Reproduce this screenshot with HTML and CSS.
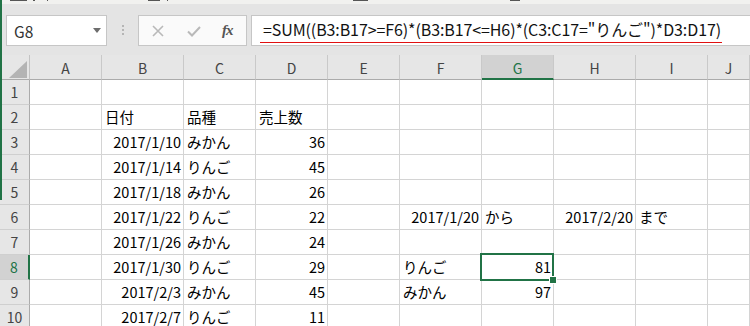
FILE: index.html
```html
<!DOCTYPE html>
<html lang="ja">
<head>
  <meta charset="UTF-8" />
  <title>Excel - SUM</title>
  <link rel="stylesheet" href="styles.css">
</head>
<body>
  <div class="app">
    <div class="window-edge"></div>
    <div class="ribbon-edge">
      <i class="mk" style="margin-left:10px;width:17px"></i>
      <i class="mk" style="margin-left:6px;width:2px"></i>
      <i class="mk" style="margin-left:12px;width:1px"></i>
      <i class="mk" style="margin-left:100px;width:12px"></i>
      <i class="mk" style="margin-left:7px;width:1px"></i>
      <i class="mk" style="margin-left:185px;width:15px"></i>
      <i class="mk" style="margin-left:142px;width:10px"></i>
    </div>

    <div class="formula-bar">
      <div class="name-box">
        <span>G8</span>
        <svg class="drop" width="8" height="5" viewBox="0 0 8 5"><path d="M0 0h8L4 5z" fill="#6d6d6d"/></svg>
      </div>
      <div class="grip"><i></i><i></i><i></i></div>
      <div class="fx-buttons">
        <svg width="12" height="12" viewBox="0 0 12 12"><path d="M1 1l10 10M11 1L1 11" stroke="#b9b9b9" stroke-width="1.6"/></svg>
        <svg width="14" height="12" viewBox="0 0 14 12"><path d="M1 6.5l4 4L13 2" fill="none" stroke="#b9b9b9" stroke-width="2"/></svg>
        <span class="fx">fx</span>
      </div>
      <div class="formula-input">
        <span class="formula">=SUM((B3:B17&gt;=F6)*(B3:B17&lt;=H6)*(C3:C17="りんご")*D3:D17)</span>
      </div>
    </div>

    <div class="sheet">
      <div class="row head">
        <div class="corner"><svg width="18" height="17" viewBox="0 0 18 17"><path d="M18 0v17H0z" fill="#b4b4b4"/></svg></div>
        <div class="ch">A</div><div class="ch">B</div><div class="ch">C</div><div class="ch">D</div><div class="ch">E</div>
        <div class="ch">F</div><div class="ch sel">G</div><div class="ch">H</div><div class="ch">I</div><div class="ch">J</div>
      </div>

      <div class="row">
        <div class="rh">1</div><div class="c"></div><div class="c"></div><div class="c"></div><div class="c"></div><div class="c"></div>
        <div class="c"></div><div class="c"></div><div class="c"></div><div class="c"></div><div class="c"></div>
      </div>
      <div class="row">
        <div class="rh">2</div><div class="c"></div><div class="c">日付</div><div class="c">品種</div><div class="c">売上数</div><div class="c"></div>
        <div class="c"></div><div class="c"></div><div class="c"></div><div class="c"></div><div class="c"></div>
      </div>
      <div class="row">
        <div class="rh">3</div><div class="c"></div><div class="c num">2017/1/10</div><div class="c">みかん</div><div class="c num">36</div><div class="c"></div>
        <div class="c"></div><div class="c"></div><div class="c"></div><div class="c"></div><div class="c"></div>
      </div>
      <div class="row">
        <div class="rh">4</div><div class="c"></div><div class="c num">2017/1/14</div><div class="c">りんご</div><div class="c num">45</div><div class="c"></div>
        <div class="c"></div><div class="c"></div><div class="c"></div><div class="c"></div><div class="c"></div>
      </div>
      <div class="row">
        <div class="rh">5</div><div class="c"></div><div class="c num">2017/1/18</div><div class="c">みかん</div><div class="c num">26</div><div class="c"></div>
        <div class="c"></div><div class="c"></div><div class="c"></div><div class="c"></div><div class="c"></div>
      </div>
      <div class="row">
        <div class="rh">6</div><div class="c"></div><div class="c num">2017/1/22</div><div class="c">りんご</div><div class="c num">22</div><div class="c"></div>
        <div class="c num">2017/1/20</div><div class="c">から</div><div class="c num">2017/2/20</div><div class="c">まで</div><div class="c"></div>
      </div>
      <div class="row">
        <div class="rh">7</div><div class="c"></div><div class="c num">2017/1/26</div><div class="c">みかん</div><div class="c num">24</div><div class="c"></div>
        <div class="c"></div><div class="c"></div><div class="c"></div><div class="c"></div><div class="c"></div>
      </div>
      <div class="row">
        <div class="rh sel">8</div><div class="c"></div><div class="c num">2017/1/30</div><div class="c">りんご</div><div class="c num">29</div><div class="c"></div>
        <div class="c">りんご</div><div class="c num active">81<span class="handle"></span></div><div class="c"></div><div class="c"></div><div class="c"></div>
      </div>
      <div class="row">
        <div class="rh">9</div><div class="c"></div><div class="c num">2017/2/3</div><div class="c">みかん</div><div class="c num">45</div><div class="c"></div>
        <div class="c">みかん</div><div class="c num">97</div><div class="c"></div><div class="c"></div><div class="c"></div>
      </div>
      <div class="row">
        <div class="rh">10</div><div class="c"></div><div class="c num">2017/2/7</div><div class="c">りんご</div><div class="c num">11</div><div class="c"></div>
        <div class="c"></div><div class="c"></div><div class="c"></div><div class="c"></div><div class="c"></div>
      </div>
    </div>
  </div>
</body>
</html>
```

FILE: styles.css
```css
body {
  margin: 0;
  padding: 0;
  font-family: "Noto Sans CJK JP", "Noto Sans", sans-serif;
  color: #000;
  background: #fff;
}

.app {
  position: relative;
  width: 750px;
  height: 326px;
  overflow: hidden;
}

/* green frame of the window, drawn over the left edge */
.window-edge {
  position: absolute;
  left: 0;
  top: 0;
  width: 2px;
  height: 200px;
  background: #217346;
  z-index: 3;
}

/* bottom edge of the ribbon */
.ribbon-edge {
  height: 4px;
  background: #f1f1ef;
  display: flex;
  align-items: flex-start;
}

.mk {
  display: block;
  height: 1px;
  background: #555;
}

/* name box + formula bar */
.formula-bar {
  height: 51px;
  box-sizing: border-box;
  padding: 11px 0 0 6px;
  background: #e4e4e4;
  display: flex;
  align-items: flex-start;
}

.name-box,
.fx-buttons,
.formula-input {
  height: 31px;
  box-sizing: border-box;
  border: 1px solid #c6c6c6;
  background: #fff;
}

.name-box {
  width: 101px;
  display: flex;
  align-items: center;
  justify-content: space-between;
  padding: 0 5px 0 7px;
  font-size: 15.5px;
  color: #333;
}

.name-box span {
  margin-top: 1px;
}

.grip {
  width: 31px;
  display: flex;
  flex-direction: column;
  align-items: center;
  gap: 2px;
  padding-top: 10px;
}

.grip i {
  display: block;
  width: 2px;
  height: 2px;
  background: #b5b5b5;
}

.fx-buttons {
  width: 109px;
  display: flex;
  align-items: center;
  padding-left: 13px;
  gap: 23px;
  background: #fafafa;
}

.fx {
  font-family: "Liberation Serif", serif;
  font-style: italic;
  font-weight: bold;
  font-size: 15px;
  color: #555;
  margin-left: -2px;
  letter-spacing: -1px;
}

.formula-input {
  flex: 1;
  margin-left: 4px;
  border-right: none;
  padding-left: 9px;
  font-size: 16px;
  color: #111;
}

.formula {
  display: inline-block;
  line-height: 22px;
  margin-top: 2px;
  padding: 0 1px 2px 3px;
  border-bottom: 1px solid #e01010;
  margin-left: -1px;
  letter-spacing: -0.1px;
}

/* worksheet */
.sheet {
  font-size: 14.5px;
}

.row {
  display: grid;
  grid-template-columns: 30px 72px 82px 72px 72px 72px 82px 72px 82px 72px 1fr;
  height: 25px;
}

.row.head {
  background: #e6e6e6;
}

.corner,
.ch,
.rh {
  background: #e6e6e6;
  color: #444;
  box-sizing: border-box;
  display: flex;
  align-items: center;
  justify-content: center;
}

.corner {
  border-right: 1px solid #c3c3c3;
  border-bottom: 1px solid #ababab;
  align-items: flex-end;
  justify-content: flex-end;
  padding: 0 2px 1px 0;
}

.ch {
  border-right: 1px solid #c9c9c9;
  border-bottom: 1px solid #ababab;
  font-size: 14px;
  padding-top: 1px;
}

.ch.sel {
  background: #d2d2d2;
  border-bottom: 2px solid #217346;
  color: #217346;
  padding-top: 2px;
}

.rh {
  border-right: 1px solid #ababab;
  border-bottom: 1px solid #cfcfcf;
  font-size: 14px;
}

.rh.sel {
  background: #d2d2d2;
  border-right: 2px solid #217346;
  color: #217346;
}

.c {
  box-sizing: border-box;
  border-right: 1px solid #d4d4d4;
  border-bottom: 1px solid #d4d4d4;
  line-height: 24px;
  padding: 0 3px;
  white-space: nowrap;
  overflow: visible;
}

.c.num {
  text-align: right;
  padding-right: 2px;
}

.c.active {
  position: relative;
}

.c.active::after {
  content: "";
  position: absolute;
  left: -2px;
  top: -2px;
  right: -1px;
  bottom: -2px;
  border: 2px solid #217346;
}

.handle {
  position: absolute;
  right: -4px;
  bottom: -5px;
  width: 6px;
  height: 6px;
  background: #217346;
  border: 1px solid #fff;
  z-index: 2;
}
```
